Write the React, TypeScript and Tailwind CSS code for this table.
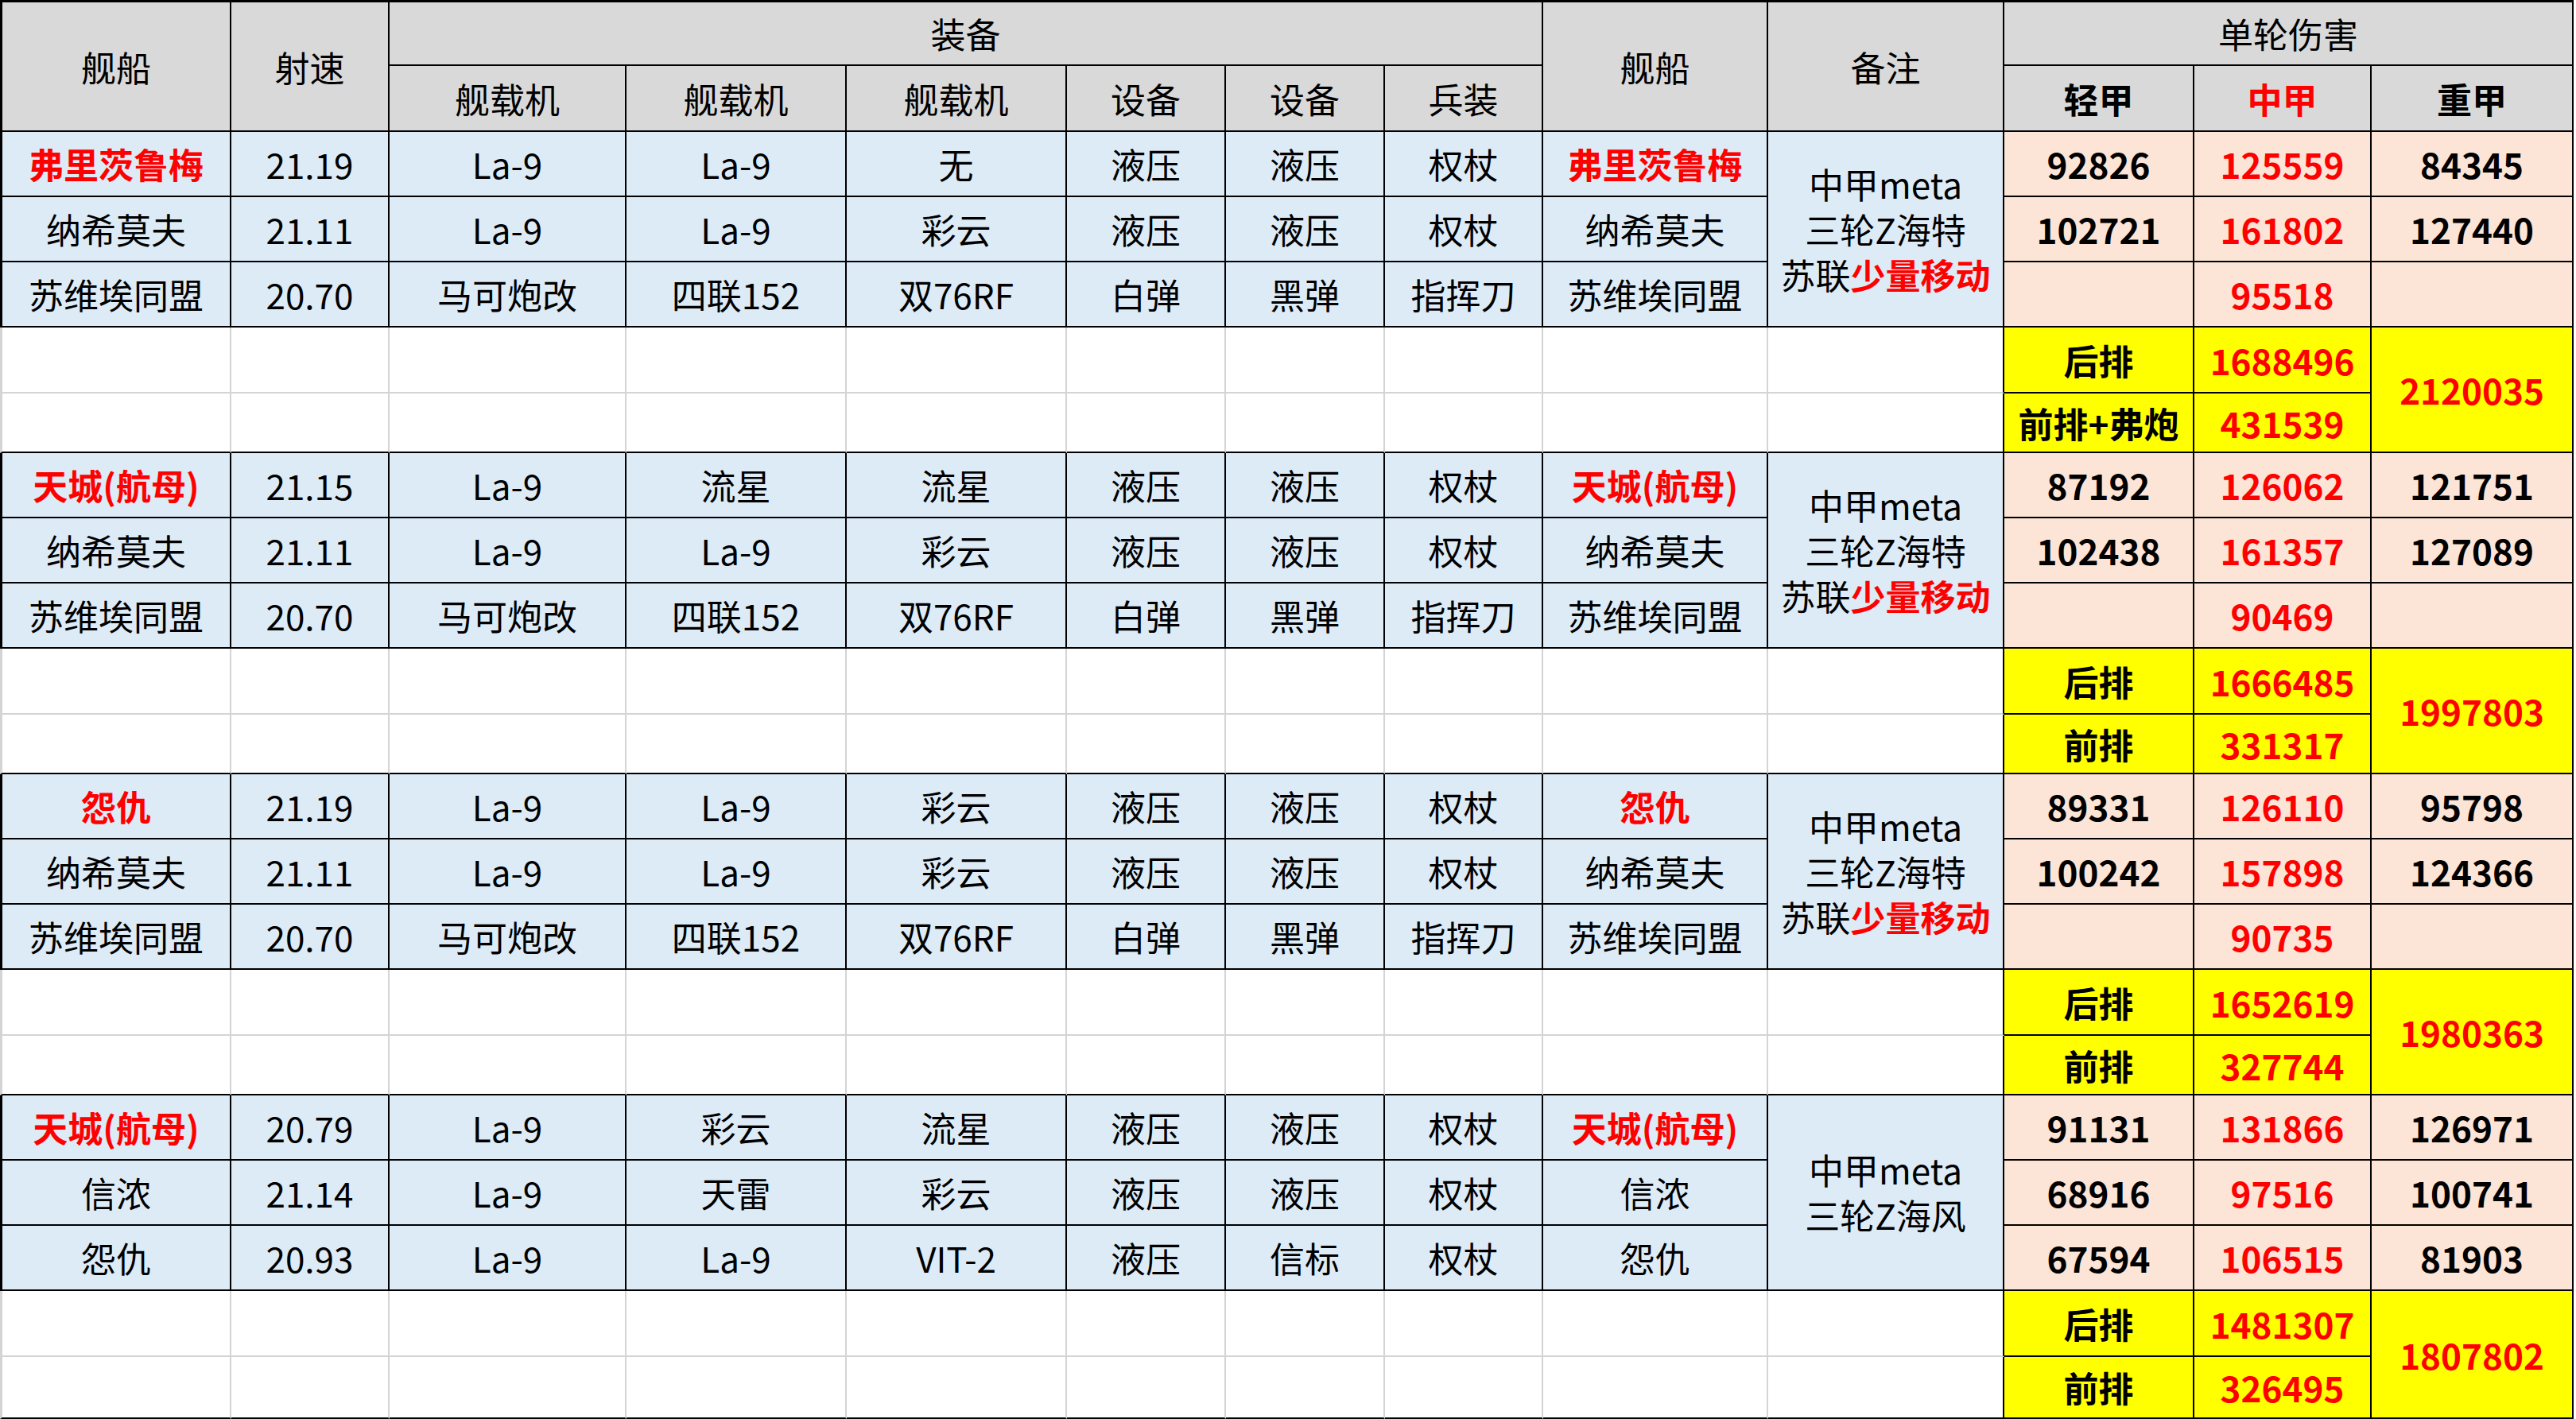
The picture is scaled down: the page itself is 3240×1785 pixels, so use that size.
import { Fragment, ReactNode } from "react";

type Ship = {
  name: string;
  speed: string;
  gear: string[];
  dmg: [string, string, string];
};

type Group = {
  ships: Ship[];
  note: ReactNode;
  back: string;
  frontLabel: string;
  front: string;
  total: string;
};

const base = "flex items-center justify-center text-center leading-none whitespace-nowrap";
const head = `${base} bg-[#d9d9d9] border-r-2 border-b-2 border-r-black border-b-black`;
const blue = `${base} bg-[#ddebf7] border-r-2 border-b-2 border-r-black border-b-black`;
const peach = `${base} bg-[#fce4d6] border-r-2 border-b-2 border-r-black border-b-black font-bold`;
const yellow = `${base} bg-[#ffff00] border-r-2 border-b-2 border-r-black border-b-black font-bold`;
const red = "text-[#ff0000] font-bold";

const noteFull = (
  <div className="leading-[57px]">
    <div>中甲meta</div>
    <div>三轮Z海特</div>
    <div>
      苏联<span className="text-[#ff0000] font-bold">少量移动</span>
    </div>
  </div>
);

const sovietRow: Omit<Ship, "dmg"> = {
  name: "苏维埃同盟",
  speed: "20.70",
  gear: ["马可炮改", "四联152", "双76RF", "白弹", "黑弹", "指挥刀"],
};

const nakhimov: Omit<Ship, "dmg"> = {
  name: "纳希莫夫",
  speed: "21.11",
  gear: ["La-9", "La-9", "彩云", "液压", "液压", "权杖"],
};

const groups: Group[] = [
  {
    ships: [
      {
        name: "弗里茨鲁梅",
        speed: "21.19",
        gear: ["La-9", "La-9", "无", "液压", "液压", "权杖"],
        dmg: ["92826", "125559", "84345"],
      },
      { ...nakhimov, dmg: ["102721", "161802", "127440"] },
      { ...sovietRow, dmg: ["", "95518", ""] },
    ],
    note: noteFull,
    back: "1688496",
    frontLabel: "前排+弗炮",
    front: "431539",
    total: "2120035",
  },
  {
    ships: [
      {
        name: "天城(航母)",
        speed: "21.15",
        gear: ["La-9", "流星", "流星", "液压", "液压", "权杖"],
        dmg: ["87192", "126062", "121751"],
      },
      { ...nakhimov, dmg: ["102438", "161357", "127089"] },
      { ...sovietRow, dmg: ["", "90469", ""] },
    ],
    note: noteFull,
    back: "1666485",
    frontLabel: "前排",
    front: "331317",
    total: "1997803",
  },
  {
    ships: [
      {
        name: "怨仇",
        speed: "21.19",
        gear: ["La-9", "La-9", "彩云", "液压", "液压", "权杖"],
        dmg: ["89331", "126110", "95798"],
      },
      { ...nakhimov, dmg: ["100242", "157898", "124366"] },
      { ...sovietRow, dmg: ["", "90735", ""] },
    ],
    note: noteFull,
    back: "1652619",
    frontLabel: "前排",
    front: "327744",
    total: "1980363",
  },
  {
    ships: [
      {
        name: "天城(航母)",
        speed: "20.79",
        gear: ["La-9", "彩云", "流星", "液压", "液压", "权杖"],
        dmg: ["91131", "131866", "126971"],
      },
      {
        name: "信浓",
        speed: "21.14",
        gear: ["La-9", "天雷", "彩云", "液压", "液压", "权杖"],
        dmg: ["68916", "97516", "100741"],
      },
      {
        name: "怨仇",
        speed: "20.93",
        gear: ["La-9", "La-9", "VIT-2", "液压", "信标", "权杖"],
        dmg: ["67594", "106515", "81903"],
      },
    ],
    note: (
      <div className="leading-[57px]">
        <div>中甲meta</div>
        <div>三轮Z海风</div>
      </div>
    ),
    back: "1481307",
    frontLabel: "前排",
    front: "326495",
    total: "1807802",
  },
];

function BlankCells({ lower }: { lower: boolean }) {
  const cells = Array.from({ length: 10 });
  return (
    <>
      {cells.map((_, i) => {
        const left = i === 0 ? "border-l-[3px] border-l-[#d4d4d4]" : "";
        const right = i === 9 ? "border-r-black" : "border-r-[#d4d4d4]";
        const bottom = lower ? "border-b-black" : "border-b-[#d4d4d4]";
        return (
          <div
            key={i}
            className={`bg-white border-r-2 border-b-2 ${left} ${right} ${bottom}`}
          />
        );
      })}
    </>
  );
}

function GroupRows({ group }: { group: Group }) {
  return (
    <>
      {group.ships.map((ship, i) => (
        <Fragment key={i}>
          <div className={`${blue} border-l-[3px] border-l-black ${i === 0 ? red : ""}`}>
            {ship.name}
          </div>
          <div className={blue}>{ship.speed}</div>
          {ship.gear.map((g, j) => (
            <div key={j} className={blue}>
              {g}
            </div>
          ))}
          <div className={`${blue} ${i === 0 ? red : ""}`}>{ship.name}</div>
          {i === 0 && <div className={`${blue} row-span-3`}>{group.note}</div>}
          <div className={peach}>{ship.dmg[0]}</div>
          <div className={`${peach} text-[#ff0000]`}>{ship.dmg[1]}</div>
          <div className={peach}>{ship.dmg[2]}</div>
        </Fragment>
      ))}
      <BlankCells lower={false} />
      <div className={yellow}>后排</div>
      <div className={`${yellow} text-[#ff0000]`}>{group.back}</div>
      <div className={`${yellow} row-span-2 text-[#ff0000]`}>{group.total}</div>
      <BlankCells lower={true} />
      <div className={yellow}>{group.frontLabel}</div>
      <div className={`${yellow} text-[#ff0000]`}>{group.front}</div>
    </>
  );
}

export default function App() {
  return (
    <div className="min-h-screen bg-white font-['Noto_Sans_CJK_SC','Noto_Sans',sans-serif] text-[44px] text-black">
      <div className="grid w-[3237px] grid-cols-[291px_199px_298px_277px_277px_200px_200px_199px_283px_297px_239px_223px_254px] grid-rows-[83px_83px_repeat(3,82px_82px_82px_83px_75px)_82px_82px_82px_83px_78px]">
        <div className={`${head} row-span-2 border-t-[3px] border-t-black border-l-[3px] border-l-black`}>
          舰船
        </div>
        <div className={`${head} row-span-2 border-t-[3px] border-t-black`}>射速</div>
        <div className={`${head} col-span-6 border-t-[3px] border-t-black`}>装备</div>
        <div className={`${head} row-span-2 border-t-[3px] border-t-black`}>舰船</div>
        <div className={`${head} row-span-2 border-t-[3px] border-t-black`}>备注</div>
        <div className={`${head} col-span-3 border-t-[3px] border-t-black`}>单轮伤害</div>

        <div className={head}>舰载机</div>
        <div className={head}>舰载机</div>
        <div className={head}>舰载机</div>
        <div className={head}>设备</div>
        <div className={head}>设备</div>
        <div className={head}>兵装</div>
        <div className={`${head} font-bold`}>轻甲</div>
        <div className={`${head} font-bold text-[#ff0000]`}>中甲</div>
        <div className={`${head} font-bold`}>重甲</div>

        {groups.map((g, i) => (
          <GroupRows key={i} group={g} />
        ))}
      </div>
    </div>
  );
}
